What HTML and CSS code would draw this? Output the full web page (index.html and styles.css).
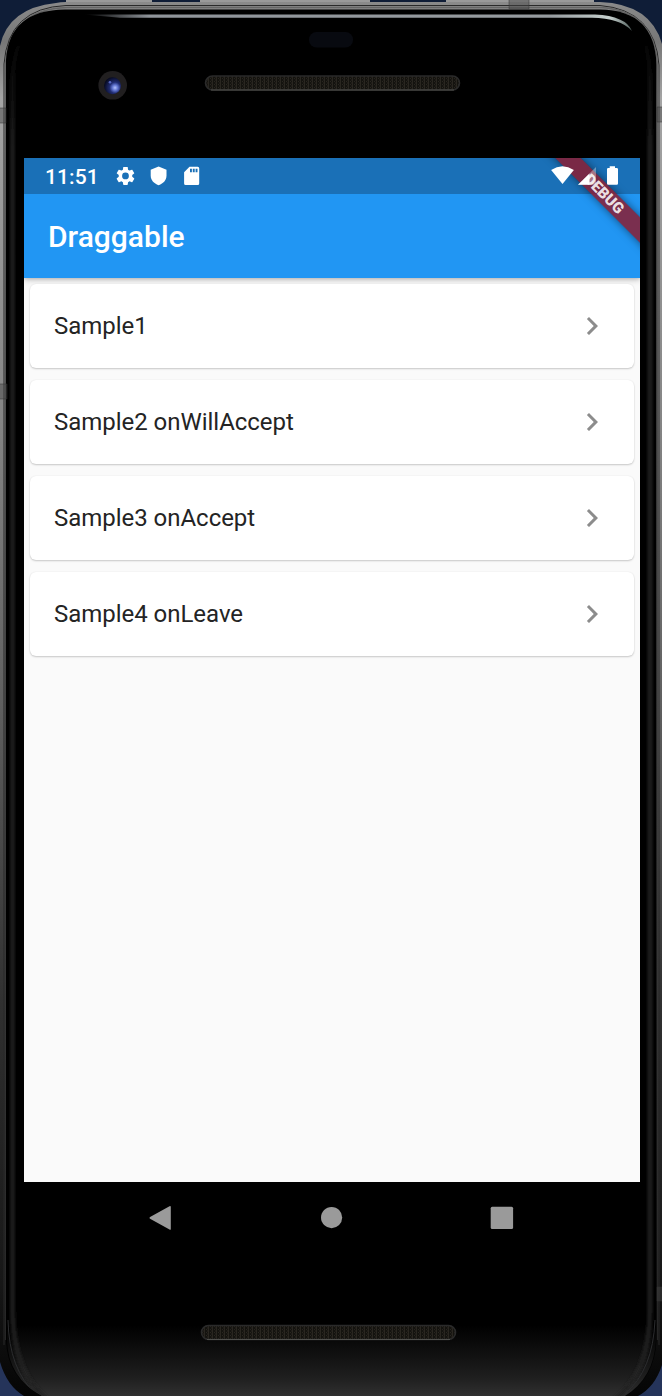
FILE: index.html
```html
<!DOCTYPE html>
<html lang="en">
<head>
<meta charset="utf-8">
<title>Draggable</title>
<link rel="stylesheet" href="styles.css">
</head>
<body>
<div class="device">
  <svg class="shell" viewBox="0 0 662 1396" aria-hidden="true">
    <defs>
      <linearGradient id="metal" gradientUnits="userSpaceOnUse" x1="0" y1="0" x2="0" y2="1396">
        <stop offset="0" stop-color="#8b8b8b"/><stop offset=".03" stop-color="#777"/><stop offset=".07" stop-color="#a4a4a4"/><stop offset=".3" stop-color="#858585"/>
        <stop offset=".5" stop-color="#606060"/><stop offset=".72" stop-color="#303030"/><stop offset=".92" stop-color="#171717"/><stop offset="1" stop-color="#050505"/>
      </linearGradient>
      <linearGradient id="metalInner" gradientUnits="userSpaceOnUse" x1="0" y1="0" x2="0" y2="1396">
        <stop offset="0" stop-color="#666"/><stop offset=".3" stop-color="#4d4d4d"/><stop offset=".8" stop-color="#303030"/><stop offset="1" stop-color="#222"/>
      </linearGradient>
      <linearGradient id="glow" gradientUnits="userSpaceOnUse" x1="0" y1="30" x2="0" y2="150">
        <stop offset="0" stop-color="#222" stop-opacity="0"/><stop offset="1" stop-color="#222"/>
      </linearGradient>
      <linearGradient id="sheen" x1="0" x2="1">
        <stop offset="0" stop-color="#8f949a" stop-opacity="0"/><stop offset=".12" stop-color="#8f949a"/><stop offset=".85" stop-color="#969b9f"/><stop offset=".96" stop-color="#c5cfcd"/><stop offset="1" stop-color="#52605d"/>
      </linearGradient>
      <linearGradient id="chin" x1="0" y1="0" x2="0" y2="1">
        <stop offset="0" stop-color="#000"/><stop offset=".45" stop-color="#121212"/><stop offset=".75" stop-color="#1f1f1f"/><stop offset="1" stop-color="#303030"/>
      </linearGradient>
      <radialGradient id="lens" cx=".65" cy=".62" r=".65">
        <stop offset="0" stop-color="#b4c2ff"/><stop offset=".25" stop-color="#6175d0"/><stop offset=".5" stop-color="#202c72"/><stop offset="1" stop-color="#070a20"/>
      </radialGradient>
      <pattern id="mesh" width="4" height="3" patternUnits="userSpaceOnUse">
        <rect width="4" height="3" fill="#14130f"/><path d="M.5 0v3M2 .5h1M3 2h1" stroke="#2e2b25" stroke-width=".8"/>
      </pattern>
      <filter id="soft" filterUnits="userSpaceOnUse" x="0" y="0" width="662" height="1410"><feGaussianBlur stdDeviation="1.8"/></filter>
      <clipPath id="glassClip"><path d="M7 60Q9 10 65 10H600Q655 10 656 65V1340Q654 1378 625 1396H42Q8 1378 7 1340Z"/></clipPath>
    </defs>
    <path class="wall" d="M0 0H662V1396H0Z"/>
    <path class="wall-low" d="M0 1350H30V1396H0ZM632 1350H662V1396H632Z"/>
    <path fill="#999" d="M66 0H152V4H66ZM200 0H370V4H200ZM446 0H594V4H446Z"/>
    <path fill="url(#metal)" d="M0 46Q8 8 56 3Q60 2 66 2H600Q651 4 662 44V1365Q655 1387 638 1396H24Q7 1386 0 1362Z"/>
    <path class="seam" d="M4 1345V64Q8 8 66 5.500H600Q655 10 659 65V1345"/>
    <path class="seam-light" stroke="url(#metalInner)" d="M5.500 1340V64Q10 9 67 7.500H600Q654 10 657.500 65V1340"/>
    <path d="M6 60Q9 10 65 9.500H600Q655 10 656.500 65V1340Q655 1378 625 1396H42Q7 1378 6 1340Z"/>
    <g clip-path="url(#glassClip)">
      <rect x="0" y="1325" width="662" height="71" fill="url(#chin)"/>
      <path class="glass-glow" filter="url(#soft)" d="M50 1402Q13 1374 12.500 1310V85Q13 45 28 30M612 1402Q650 1374 650 1310V85Q650 45 638 30"/>
      <path class="corner-line" d="M8 1320Q9 1370 36 1394M655 1320Q653 1370 625 1394"/>
    </g>
    <path class="joint" d="M-1 108h7v15h-7zM-1 384h8v15h-8zM657 107h6v15h-6zM657 1287h6v14h-6zM509 -1h20v10h-20z"/>
    <path fill="url(#sheen)" d="M84 14.500H595Q626 16 632 31Q620 18 592 17.800H120Z"/>
    <rect x="309" y="32" width="44" height="15.500" rx="7.500" fill="#080a10"/>
    <circle cx="112.700" cy="85.300" r="14.300" fill="#211f20"/>
    <circle cx="112.500" cy="85.700" r="8.500" fill="url(#lens)"/>
    <circle cx="110" cy="82.200" r="1.300" fill="#5363bc"/>
    <g class="speaker">
      <rect x="205.500" y="76" width="254" height="14" rx="7"/>
      <rect x="201.500" y="1325.500" width="254" height="14" rx="7"/>
    </g>
    <path class="speaker-lip" d="M211 90H454M207 1339.500H450"/>
  </svg>

  <main class="screen">
    <header class="top">
      <div class="status">
        <span class="clock">11:51</span>
        <svg class="notices" viewBox="0 0 88 24" aria-hidden="true">
          <path transform="translate(-.8 .7) scale(.94)" d="M19.140 12.940c.04-.3.06-.61.06-.94 0-.32-.02-.64-.07-.94l2.030-1.580c.18-.14.23-.41.12-.61l-1.920-3.320c-.12-.22-.37-.29-.59-.22l-2.390.96c-.5-.38-1.030-.7-1.620-.94L14.400 2.810c-.04-.24-.24-.41-.48-.41h-3.840c-.24 0-.43.17-.47.41l-.36 2.540c-.59.24-1.130.57-1.620.94l-2.390-.96c-.22-.08-.47 0-.59.22L2.740 8.870c-.12.21-.08.47.12.61l2.030 1.580c-.05.3-.09.63-.09.94s.02.64.07.94l-2.030 1.580c-.18.14-.23.41-.12.61l1.920 3.320c.12.22.37.29.59.22l2.390-.96c.5.38 1.030.7 1.620.94l.36 2.540c.05.24.24.41.48.41h3.840c.24 0 .44-.17.47-.41l.36-2.540c.59-.24 1.130-.56 1.620-.94l2.390.96c.22.08.47 0 .59-.22l1.920-3.320c.12-.22.07-.47-.12-.61l-2.010-1.580zM12 15.600A3.600 3.600 0 1 1 12 8.400a3.600 3.600 0 0 1 0 7.200z"/>
          <path d="M43.600 2.500L51.500 5.700V11.500C51.500 16 48.500 19.500 43.600 21.200C38.700 19.500 35.700 16 35.700 11.500V5.700Z"/>
          <path fill-rule="evenodd" d="M74.500 2.700H82.700Q84.200 2.700 84.200 4.200V19.500Q84.200 21 82.700 21H70.600Q69.100 21 69.100 19.500V8.200ZM75 4.700V8.300H76.900V4.700ZM77.800 4.700V8.300H79.700V4.700ZM80.600 4.700V8.300H82.500V4.700Z"/>
        </svg>
        <svg class="signals" viewBox="0 0 70 24" aria-hidden="true">
          <path d="M.1 6Q11.500-1.300 22.900 6L11.500 19.900Z"/>
          <path opacity=".35" d="M45 3V20.800H27Z"/><path d="M38.500 9.500V20.800H27Z"/>
          <path d="M58.700 2.200H64V4H65.700Q67 4 67 5.300V19.400Q67 20.700 65.700 20.700H57.300Q56 20.700 56 19.400V5.300Q56 4 57.300 4H58.700Z"/>
        </svg>
      </div>
      <h1 class="title">Draggable</h1>
    </header>
    <ul class="list">
      <li class="card"><span class="label">Sample1</span><svg class="chevron" viewBox="0 0 24 24"><path d="M10 6L8.590 7.410 13.170 12l-4.580 4.590L10 18l6-6z"/></svg></li>
      <li class="card"><span class="label">Sample2 onWillAccept</span><svg class="chevron" viewBox="0 0 24 24"><path d="M10 6L8.590 7.410 13.170 12l-4.580 4.590L10 18l6-6z"/></svg></li>
      <li class="card"><span class="label">Sample3 onAccept</span><svg class="chevron" viewBox="0 0 24 24"><path d="M10 6L8.590 7.410 13.170 12l-4.580 4.590L10 18l6-6z"/></svg></li>
      <li class="card"><span class="label">Sample4 onLeave</span><svg class="chevron" viewBox="0 0 24 24"><path d="M10 6L8.590 7.410 13.170 12l-4.580 4.590L10 18l6-6z"/></svg></li>
    </ul>
    <div class="ribbon">DEBUG</div>
  </main>

  <nav class="keys">
    <svg viewBox="0 0 24 26"><path d="M2.500 11.800L21.500 1.200Q22.800.7 22.800 2V24Q22.800 25.300 21.500 24.600L2.500 14Q.5 13 2.500 11.800Z"/></svg>
    <svg viewBox="0 0 24 26"><circle cx="12.600" cy="12.600" r="10.600"/></svg>
    <svg viewBox="0 0 24 26"><rect x=".7" y="1.700" width="22.400" height="22.400" rx="1.500"/></svg>
  </nav>
</div>
</body>
</html>
```
FILE: styles.css
```css
body {
  margin: 0;
  font-family: Roboto, "Liberation Sans", sans-serif;
}

.device {
  position: relative;
  box-sizing: border-box;
  width: 662px;
  height: 1396px;
  padding: 158px 22px 0 24px;
  overflow: hidden;
}

.shell {
  position: absolute;
  inset: 0;
  width: 662px;
  height: 1396px;
}

.wall { fill: #0f1d37; }
.wall-low { fill: #25345a; }
.seam { fill: none; stroke: #292929; stroke-width: 1; }
.seam-light { fill: none; stroke-width: 1.5; }
.glass-glow { fill: none; stroke: url(#glow); stroke-width: 4; }
.corner-line { fill: none; stroke: #2c2d2f; stroke-width: 1; }
.joint { fill: #444; fill-opacity: .45; stroke: #333; stroke-opacity: .7; stroke-width: .7; }
.speaker rect { fill: url(#mesh); stroke: #2a2a2a; stroke-width: 1.6; }
.speaker-lip { stroke: #50504d; stroke-width: 1; }

.screen {
  position: relative;
  height: 1024px;
  overflow: hidden;
  background: #fafafa;
}

.top {
  height: 120px;
  background: #2196f3;
  box-shadow: 0 2px 6px rgba(0, 0, 0, .22), 0 1px 3px rgba(0, 0, 0, .1);
}

.status {
  display: flex;
  align-items: center;
  box-sizing: border-box;
  height: 36px;
  padding: 0 19px 0 21px;
  background: #1a70b7;
  color: #fff;
  fill: #fff;
}

.clock {
  width: 70px;
  padding-top: 2px;
  font-size: 21px;
  font-weight: 500;
  letter-spacing: .1px;
  white-space: nowrap;
}

.notices { width: 88px; height: 24px; }

/* System icons stay above the debug ribbon. */
.signals {
  position: relative;
  z-index: 2;
  width: 70px;
  height: 24px;
  margin-left: auto;
}

.title {
  margin: 0;
  padding-left: 24px;
  color: #fff;
  font-size: 30px;
  font-weight: 500;
  line-height: 86px;
}

.list {
  display: grid;
  gap: 12px;
  margin: 0;
  padding: 6px;
  list-style: none;
}

.card {
  display: flex;
  align-items: center;
  justify-content: space-between;
  height: 84px;
  box-sizing: border-box;
  padding: 0 24px;
  border-radius: 6px;
  background: #fff;
  box-shadow: 0 1px 2px rgba(0, 0, 0, .2), 0 0 2px rgba(0, 0, 0, .06);
  color: #242424;
  font-size: 24px;
}

.label { letter-spacing: -.03px; }
.chevron { width: 36px; height: 36px; fill: #8c8c8c; }

.ribbon {
  position: absolute;
  z-index: 1;
  top: 27px;
  left: 500px;
  width: 160px;
  height: 18px;
  transform: rotate(45deg);
  background: rgba(139, 28, 48, .84);
  box-shadow: 0 0 9px rgba(0, 0, 0, .5);
  color: rgba(255, 255, 255, .87);
  font-size: 15.300px;
  font-weight: 900;
  line-height: 18px;
  text-align: center;
}

.keys {
  position: relative;
  display: flex;
  justify-content: space-between;
  padding: 23px 126px 0 124px;
  fill: #9a9a9a;
}

.keys svg { width: 24px; height: 26px; }
```
